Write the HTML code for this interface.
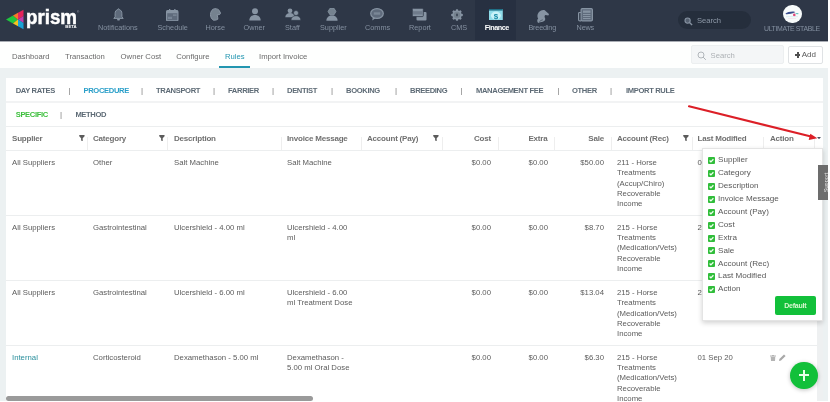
<!DOCTYPE html>
<html><head><meta charset="utf-8">
<style>
*{margin:0;padding:0;box-sizing:border-box}
html,body{width:830px;height:402px;overflow:hidden;background:#fff;font-family:"Liberation Sans",sans-serif}
.a{position:absolute}
.t{position:absolute;white-space:nowrap;line-height:10px}
#nav{left:0;top:0;width:828px;height:41px;background:#2e3747;border-bottom:1.5px solid #2b3342}
.nl{color:#8490a0;font-size:7.3px;top:23px}
.ni{position:absolute;top:8px}
#sub{left:0;top:42px;width:830px;height:26px;background:#fefffe}
.sl{color:#6a6a6a;font-size:7.7px;top:52px}
#gray{left:0;top:68px;width:828px;height:334px;background:#ecf1f2}
#panel{left:6px;top:78px;width:817px;height:324px;background:#fff}
.tab{color:#5e6b76;font-size:7.6px;font-weight:bold;top:85.8px;letter-spacing:-0.35px}
.bar{color:#777;font-size:8px;top:86px}
.hl{position:absolute;left:6px;width:817px;height:1px;background:#eceeef}
.th{color:#707070;font-size:8px;font-weight:bold;top:134.4px;letter-spacing:-0.2px}
.sep{position:absolute;top:137px;width:1px;height:13px;background:#eeeeee}
.td{color:#5c5c5c;font-size:7.75px}
.r{text-align:right}
.flt{position:absolute;top:135.1px;width:5.8px;height:6.2px}
</style></head><body><div id="root" style="position:absolute;left:0;top:0;width:830px;height:402px;will-change:transform">

<!-- NAV -->
<div id="nav" class="a">
  <!-- logo -->
  <svg class="a" style="left:0;top:0" width="30" height="40" viewBox="0 0 30 40">
    <polygon points="6,19.5 13,15.6 17.7,19.5 13,23.4" fill="#1fc63e"/>
    <polygon points="13,15.6 18,12.8 18,19.5 17.7,19.5" fill="#f47a2a"/>
    <polygon points="18,12.8 23.5,9.7 23.5,16 18,19.5" fill="#e6245c"/>
    <polygon points="18,19.5 23.5,16 23.5,23" fill="#c23fae"/>
    <polygon points="18,19.5 23.5,23 23.5,29.3 18,26.2" fill="#1aa2d6"/>
    <polygon points="13,23.4 17.7,19.5 18,19.5 18,26.2" fill="#f3c41f"/>
  </svg>
  <div class="t" style="left:26.3px;top:5.6px;font-size:20.6px;line-height:22px;font-weight:bold;color:#fff;-webkit-text-stroke:0.5px #fff;transform:scaleX(0.91);transform-origin:0 0">prism</div>
  <div class="t" style="left:77px;top:10px;font-size:3px;line-height:4px;color:#aab">&#174;</div>
  <div class="t" style="left:65.3px;top:25.2px;font-size:4.3px;line-height:4px;font-weight:bold;color:#fff">BETA</div>

  <!-- items -->
  <svg class="ni" style="left:113px;top:8px" width="11" height="13" viewBox="0 0 11 13"><path d="M5.5 0.8c.5 0 .8.3.8.8 1.7.5 2.6 2 2.6 3.9v3.3l1.3 1.6H0.8l1.3-1.6V5.5c0-1.9.9-3.4 2.6-3.9 0-.5.3-.8.8-.8z" fill="#5f6b7c" stroke="#8794a3" stroke-width="1"/><path d="M4 11h3l-.5 1.5h-2z" fill="#8794a3"/></svg>
  <div class="t nl" style="left:98px">Notifications</div>

  <svg class="ni" style="left:166px;top:8.5px" width="12.5" height="12.5" viewBox="0 0 12.5 12.5"><rect x="0.6" y="1.6" width="11.3" height="10.3" rx="1.2" fill="#5f6b7c" stroke="#8794a3" stroke-width="1.2"/><rect x="0.6" y="1.6" width="11.3" height="2.6" fill="#8794a3"/><rect x="3" y="0" width="1.3" height="2.6" fill="#8794a3"/><rect x="8.2" y="0" width="1.3" height="2.6" fill="#8794a3"/><rect x="7" y="5.6" width="3.5" height="1" fill="#8794a3"/><rect x="2" y="7.8" width="4" height="2.2" fill="#788596"/></svg>
  <div class="t nl" style="left:157.5px">Schedule</div>

  <svg class="ni" style="left:209.5px;top:8.3px" width="11.5" height="13" viewBox="0 0 11.5 13"><path d="M4.7 0.7C7 0.6 8.4 1.4 9.1 2.3L10.6 5.3 9.7 6.5 7.1 6.9C7.6 8.5 8 10 7.8 11.2 6.5 12.1 4.6 12.4 3.5 12.2 1.3 10.8 0.5 8.8 0.5 6.7 0.5 3.3 2.4 0.9 4.7 0.7z" fill="#75828f" stroke="#8b97a5" stroke-width="1"/></svg>
  <div class="t nl" style="left:205.5px">Horse</div>

  <svg class="ni" style="left:248.5px;top:8px" width="12" height="13" viewBox="0 0 12 13"><circle cx="6" cy="3.3" r="3" fill="#8794a3"/><path d="M0.3 12.6c0-3.5 2.4-5.6 5.7-5.6s5.7 2.1 5.7 5.6z" fill="#8794a3"/></svg>
  <div class="t nl" style="left:243.5px">Owner</div>

  <svg class="ni" style="left:284.5px;top:8px" width="16" height="12.5" viewBox="0 0 16 12.5"><circle cx="5" cy="2.8" r="2.4" fill="#8794a3"/><path d="M0.3 9.3c0-2.6 2-4.3 4.7-4.3s4.2 1.5 4.6 3v1.3z" fill="#8794a3"/><circle cx="11" cy="5" r="2.5" fill="#8794a3" stroke="#2e3747" stroke-width=".6"/><path d="M6 12.3c0-2.8 2-4.6 5-4.6s4.8 1.8 4.8 4.6z" fill="#8794a3" stroke="#2e3747" stroke-width=".6"/></svg>
  <div class="t nl" style="left:285px">Staff</div>

  <svg class="ni" style="left:326.3px;top:8px" width="12" height="13" viewBox="0 0 12 13"><path d="M4 0.3h4l1.9 3.2L8 6.8H4L2.1 3.5z" fill="#75828f" stroke="#8794a3" stroke-width=".9"/><path d="M0.4 12.8c0-3.2 2.3-5.2 5.6-5.2s5.6 2 5.6 5.2z" fill="#8794a3"/></svg>
  <div class="t nl" style="left:320px">Supplier</div>

  <svg class="ni" style="left:370px;top:8px" width="14" height="13" viewBox="0 0 14 13"><ellipse cx="7" cy="5.5" rx="6.3" ry="4.9" fill="#5f6b7c" stroke="#8794a3" stroke-width="1.2"/><path d="M2.8 9.2l-.6 3.4 3.4-2.4z" fill="#8794a3"/><rect x="3.8" y="4.3" width="6.4" height="2.4" fill="#7a8796"/></svg>
  <div class="t nl" style="left:365px">Comms</div>

  <svg class="ni" style="left:411.5px;top:8px" width="15" height="13" viewBox="0 0 15 13"><rect x="4.5" y="4" width="10" height="8.5" rx="1" fill="#8794a3"/><rect x="0.3" y="0.3" width="11" height="8.3" rx="1" fill="#8794a3" stroke="#2e3747" stroke-width=".8"/><rect x="1" y="3.2" width="9.6" height="3.3" fill="#6f7b8b"/></svg>
  <div class="t nl" style="left:409px">Report</div>

  <svg class="ni" style="left:450.9px;top:8.6px" width="12" height="12" viewBox="0 0 12 12"><g fill="#8794a3"><circle cx="6" cy="6" r="4.6"/><rect x="4.8" y="0.2" width="2.4" height="11.6" rx=".8"/><rect x="4.8" y="0.2" width="2.4" height="11.6" rx=".8" transform="rotate(90 6 6)"/><rect x="4.8" y="0.2" width="2.4" height="11.6" rx=".8" transform="rotate(45 6 6)"/><rect x="4.8" y="0.2" width="2.4" height="11.6" rx=".8" transform="rotate(-45 6 6)"/></g><circle cx="6" cy="6" r="3.3" fill="#75828f"/><ellipse cx="6" cy="6" rx="1" ry="1.4" fill="#3e4858"/></svg>
  <div class="t nl" style="left:451px">CMS</div>

  <div class="a" style="left:474.7px;top:0;width:41.5px;height:40px;background:#273041"></div>
  <svg class="ni" style="left:488.8px;top:8.8px" width="13.8" height="11.7" viewBox="0 0 13.8 11.7"><rect x="0" y="0" width="13.8" height="11.7" fill="#8fdbe9"/><rect x="0" y="0" width="13.8" height="1.6" fill="#1f6f86"/><ellipse cx="6.9" cy="6.5" rx="5" ry="4" fill="#c9f2f8"/><text x="6.9" y="9.6" font-size="8" font-weight="bold" text-anchor="middle" fill="#168aa6" font-family="Liberation Sans">$</text></svg>
  <div class="t nl" style="left:484.7px;color:#fff;font-weight:bold;letter-spacing:-0.5px">Finance</div>

  <svg class="ni" style="left:535.8px;top:9px" width="13.5" height="14.5" viewBox="0 0 13.5 14.5"><path d="M2.2 14C1 12.8.8 11 2.2 9.6 1 8 1.1 5 3 3 4.6 1.2 7 .5 8.8 1.2l1.3 1.2 3 2.6-.8 1.5-2.8-.4C8.6 6.4 8.2 7.6 9 9c.7 1.6-.3 3.3-2.3 3.8-1.6.4-3.3.6-4.5 1.2z" fill="#8794a3"/><path d="M3.5 12.5c1-1 2.3-1.3 3.3-1.7" stroke="#2e3747" stroke-width=".6" fill="none"/></svg>
  <div class="t nl" style="left:528.4px;letter-spacing:-0.2px">Breeding</div>

  <svg class="ni" style="left:577.5px;top:8px" width="15" height="13.5" viewBox="0 0 15 13.5"><rect x="3.1" y="0.6" width="11.3" height="12.3" rx="1.2" fill="#5f6b7c" stroke="#8794a3" stroke-width="1.2"/><path d="M3.1 4.5H1.6c-.6 0-1 .4-1 1v6.2c0 .7.5 1.2 1.2 1.2h1.3" fill="none" stroke="#8794a3" stroke-width="1.2"/><rect x="5" y="2.5" width="7.5" height="2.3" fill="#8794a3"/><rect x="5" y="6" width="7.5" height="1" fill="#8794a3"/><rect x="5" y="8" width="7.5" height="1" fill="#8794a3"/><rect x="5" y="10" width="7.5" height="1" fill="#8794a3"/></svg>
  <div class="t nl" style="left:576.6px;letter-spacing:-0.2px">News</div>

  <div class="a" style="left:678px;top:11px;width:73px;height:18px;border-radius:9px;background:#252e3c"></div>
  <svg class="a" style="left:684px;top:16.5px" width="9" height="9" viewBox="0 0 9 9"><circle cx="3.6" cy="3.6" r="2.6" fill="#556070" stroke="#8692a1" stroke-width="1.1"/><path d="M5.5 5.5l2.6 2.6" stroke="#8692a1" stroke-width="1.4"/></svg>
  <div class="t nl" style="left:697px;top:15.5px;font-size:7.6px;color:#8e99a8">Search</div>

  <div class="a" style="left:783.3px;top:4.7px;width:18.4px;height:18.5px;border-radius:50%;background:#f7fbfb"></div>
  <svg class="a" style="left:783px;top:4.5px" width="19" height="19" viewBox="0 0 19 19"><path d="M2.5 8.6C4 7 7 6.3 10.5 6.4 12 6.5 13 7 11.5 7.6 9 8.6 6 9.4 3 9.2z" fill="#3b4f8e"/><circle cx="11.3" cy="9.9" r="1.3" fill="#e2477a"/><path d="M12 8.2l2.5-.3 1.5 1.2-2.2.2z" fill="#5cc0b8"/><rect x="3" y="11.5" width="12" height="0.6" fill="#cde6ec"/><rect x="5" y="13" width="8" height="0.5" fill="#f0d6e0"/></svg>
  <div class="t nl" style="left:764px;top:24px;font-size:6.9px;letter-spacing:-0.35px">ULTIMATE STABLE</div>
</div>

<!-- SUB NAV -->
<div class="a" style="left:0;top:41px;width:828px;height:1px;background:#a9adb4"></div>
<div id="sub" class="a"></div>
<div class="t sl" style="left:12px">Dashboard</div>
<div class="t sl" style="left:65px">Transaction</div>
<div class="t sl" style="left:120.6px">Owner Cost</div>
<div class="t sl" style="left:176.3px">Configure</div>
<div class="t sl" style="left:225px;color:#2396b0">Rules</div>
<div class="a" style="left:219px;top:66px;width:31px;height:2px;background:#2396b0"></div>
<div class="t sl" style="left:259px">Import Invoice</div>

<div class="a" style="left:691px;top:45px;width:93px;height:19px;background:#f4f6f7;border:1px solid #eceff0;border-radius:2px"></div>
<svg class="a" style="left:697px;top:51px" width="10" height="10" viewBox="0 0 10 10"><circle cx="4" cy="4" r="3" fill="none" stroke="#aab0b4" stroke-width="0.9"/><path d="M6.2 6.2l2.6 2.6" stroke="#aab0b4" stroke-width="1"/></svg>
<div class="t" style="left:710.5px;top:50.5px;font-size:7.7px;color:#adb1b5">Search</div>
<div class="a" style="left:788px;top:45.5px;width:35px;height:18px;background:#fff;border:1px solid #dfe2e4;border-radius:2px"></div>
<div class="a" style="left:794.6px;top:53.6px;width:5.9px;height:2px;background:#505050"></div><div class="a" style="left:796.55px;top:51.65px;width:2px;height:5.9px;background:#505050"></div><div class="t" style="left:801.7px;top:50px;font-size:8px;color:#5a5a5a">Add</div>

<!-- GRAY + PANEL -->
<div id="gray" class="a"></div>
<div id="panel" class="a"></div>

<!-- tabs -->
<div class="t tab" style="left:15.7px">DAY RATES</div>
<div class="t bar" style="left:68.5px">|</div>
<div class="t tab" style="left:83.5px;color:#2a9fc9">PROCEDURE</div>
<div class="t bar" style="left:141px">|</div>
<div class="t tab" style="left:156px">TRANSPORT</div>
<div class="t bar" style="left:213px">|</div>
<div class="t tab" style="left:228px">FARRIER</div>
<div class="t bar" style="left:272px">|</div>
<div class="t tab" style="left:287px">DENTIST</div>
<div class="t bar" style="left:331px">|</div>
<div class="t tab" style="left:346px">BOOKING</div>
<div class="t bar" style="left:395px">|</div>
<div class="t tab" style="left:410px">BREEDING</div>
<div class="t bar" style="left:460.5px">|</div>
<div class="t tab" style="left:476px">MANAGEMENT FEE</div>
<div class="t bar" style="left:557.5px">|</div>
<div class="t tab" style="left:572px">OTHER</div>
<div class="t bar" style="left:610px">|</div>
<div class="t tab" style="left:626px">IMPORT RULE</div>
<div class="hl" style="top:101px;height:2px;background:#f2f3f4"></div>

<div class="t tab" style="left:15.7px;top:109.8px;color:#3cbf3c">SPECIFIC</div>
<div class="t bar" style="left:60px;top:110px">|</div>
<div class="t tab" style="left:75.4px;top:109.8px">METHOD</div>
<div class="hl" style="top:126px"></div>

<!-- header -->
<div class="t th" style="left:12px">Supplier</div>
<div class="t th" style="left:93px">Category</div>
<div class="t th" style="left:174px">Description</div>
<div class="t th" style="left:287px">Invoice Message</div>
<div class="t th" style="left:367px">Account (Pay)</div>
<div class="t th r" style="left:451px;width:40px">Cost</div>
<div class="t th r" style="left:507px;width:40.5px">Extra</div>
<div class="t th r" style="left:564px;width:40px">Sale</div>
<div class="t th" style="left:617px">Account (Rec)</div>
<div class="t th" style="left:697.5px">Last Modified</div>
<div class="t th" style="left:770px">Action</div>
<svg class="flt" style="left:79.3px" viewBox="0 0 6 7"><path d="M0 0h6v1.5L3.9 3.6V7L2.1 6.2V3.6L0 1.5z" fill="#5c5c5c"/></svg>
<svg class="flt" style="left:158.8px" viewBox="0 0 6 7"><path d="M0 0h6v1.5L3.9 3.6V7L2.1 6.2V3.6L0 1.5z" fill="#5c5c5c"/></svg>
<svg class="flt" style="left:433.2px" viewBox="0 0 6 7"><path d="M0 0h6v1.5L3.9 3.6V7L2.1 6.2V3.6L0 1.5z" fill="#5c5c5c"/></svg>
<svg class="flt" style="left:683.4px" viewBox="0 0 6 7"><path d="M0 0h6v1.5L3.9 3.6V7L2.1 6.2V3.6L0 1.5z" fill="#5c5c5c"/></svg>
<div class="sep" style="left:87px"></div>
<div class="sep" style="left:167px"></div>
<div class="sep" style="left:281px"></div>
<div class="sep" style="left:361px"></div>
<div class="sep" style="left:442px"></div>
<div class="sep" style="left:498px"></div>
<div class="sep" style="left:554px"></div>
<div class="sep" style="left:611px"></div>
<div class="sep" style="left:692px"></div>
<div class="sep" style="left:763px"></div>
<div class="sep" style="left:814px"></div>
<svg class="a" style="left:817.3px;top:137.3px" width="4" height="2.2" viewBox="0 0 4 2.2"><path d="M0 0h4L2 2.2z" fill="#4a5060"/></svg>
<div class="hl" style="top:150px"></div>

<!-- vertical track -->
<div class="a" style="left:817px;top:151px;width:6px;height:251px;background:#eef0f1"></div>

<!-- rows -->
<div class="hl" style="top:215px;width:811px"></div>
<div class="hl" style="top:280px;width:811px"></div>
<div class="hl" style="top:345px;width:811px"></div>

<!-- row 1 -->
<div class="t td" style="left:12px;top:158.2px">All Suppliers</div>
<div class="t td" style="left:93px;top:158.2px">Other</div>
<div class="t td" style="left:174px;top:158.2px">Salt Machine</div>
<div class="t td" style="left:287px;top:158.2px">Salt Machine</div>
<div class="t td r" style="left:441px;width:50px;top:158.2px">$0.00</div>
<div class="t td r" style="left:498px;width:50px;top:158.2px">$0.00</div>
<div class="t td r" style="left:554px;width:50px;top:158.2px">$50.00</div>
<div class="t td" style="left:617px;top:158.2px;line-height:10.3px">211 - Horse<br>Treatments<br>(Accup/Chiro)<br>Recoverable<br>Income</div>
<div class="t td" style="left:697.5px;top:158.2px">01 Sep 20</div>

<!-- row 2 -->
<div class="t td" style="left:12px;top:222.7px">All Suppliers</div>
<div class="t td" style="left:93px;top:222.7px">Gastrointestinal</div>
<div class="t td" style="left:174px;top:222.7px">Ulcershield - 4.00 ml</div>
<div class="t td" style="left:287px;top:222.7px;line-height:10.3px">Ulcershield - 4.00<br>ml</div>
<div class="t td r" style="left:441px;width:50px;top:222.7px">$0.00</div>
<div class="t td r" style="left:498px;width:50px;top:222.7px">$0.00</div>
<div class="t td r" style="left:554px;width:50px;top:222.7px">$8.70</div>
<div class="t td" style="left:617px;top:222.7px;line-height:10.3px">215 - Horse<br>Treatments<br>(Medication/Vets)<br>Recoverable<br>Income</div>
<div class="t td" style="left:697.5px;top:222.7px">21 Sep 20</div>

<!-- row 3 -->
<div class="t td" style="left:12px;top:288.2px">All Suppliers</div>
<div class="t td" style="left:93px;top:288.2px">Gastrointestinal</div>
<div class="t td" style="left:174px;top:288.2px">Ulcershield - 6.00 ml</div>
<div class="t td" style="left:287px;top:288.2px;line-height:10.3px">Ulcershield - 6.00<br>ml Treatment Dose</div>
<div class="t td r" style="left:441px;width:50px;top:288.2px">$0.00</div>
<div class="t td r" style="left:498px;width:50px;top:288.2px">$0.00</div>
<div class="t td r" style="left:554px;width:50px;top:288.2px">$13.04</div>
<div class="t td" style="left:617px;top:288.2px;line-height:10.3px">215 - Horse<br>Treatments<br>(Medication/Vets)<br>Recoverable<br>Income</div>
<div class="t td" style="left:697.5px;top:288.2px">21 Sep 20</div>

<!-- row 4 -->
<div class="t td" style="left:12px;top:352.7px;color:#2a8f9c">Internal</div>
<div class="t td" style="left:93px;top:352.7px">Corticosteroid</div>
<div class="t td" style="left:174px;top:352.7px">Dexamethason - 5.00 ml</div>
<div class="t td" style="left:287px;top:352.7px;line-height:10.3px">Dexamethason -<br>5.00 ml Oral Dose</div>
<div class="t td r" style="left:441px;width:50px;top:352.7px">$0.00</div>
<div class="t td r" style="left:498px;width:50px;top:352.7px">$0.00</div>
<div class="t td r" style="left:554px;width:50px;top:352.7px">$6.30</div>
<div class="t td" style="left:617px;top:352.7px;line-height:10.3px">215 - Horse<br>Treatments<br>(Medication/Vets)<br>Recoverable<br>Income</div>
<div class="t td" style="left:697.5px;top:352.7px">01 Sep 20</div>
<svg class="a" style="left:770px;top:354.5px" width="6" height="6" viewBox="0 0 6 6"><rect x="0" y="0.5" width="6" height="1" fill="#b4b4b4"/><rect x="2" y="0" width="2" height="1" fill="#b4b4b4"/><path d="M0.7 1.8h4.6L5 6H1z" fill="#b4b4b4"/></svg>
<svg class="a" style="left:779px;top:354px" width="7" height="7" viewBox="0 0 7 7"><path d="M0 7l.4-2L5 0.4 6.6 2 2 6.6z" fill="#a8a8a8"/></svg>

<!-- h scrollbar -->
<div class="a" style="left:6px;top:395.5px;width:306.5px;height:5.5px;border-radius:3px;background:#9a9a9a"></div>

<div class="a" style="left:0;top:401px;width:830px;height:1px;background:#fff"></div>
<!-- red arrow -->
<svg class="a" style="left:0;top:0" width="830" height="402" viewBox="0 0 830 402">
  <line x1="689" y1="106.3" x2="811" y2="136.5" stroke="#dc1f27" stroke-width="2" stroke-linecap="round"/>
  <polygon points="817.3,138.3 808.7,139.9 810.3,133.8" fill="#dc1f27"/>
</svg>

<!-- dropdown -->
<div class="a" style="left:701.5px;top:147.5px;width:121.5px;height:173.5px;background:#fff;border:1px solid #e4e4e4;box-shadow:0 2px 5px rgba(0,0,0,.18)"></div>
<div class="a" style="left:708px;top:157.10px;width:7px;height:7px;border-radius:1px;background:#30bd3a"></div>
<svg class="a" style="left:708px;top:157.10px" width="7" height="7" viewBox="0 0 7 7"><path d="M1.6 3.5l1.3 1.4 2.5-2.6" stroke="#f2fff2" stroke-width="1.3" fill="none"/></svg>
<div class="t" style="left:718px;top:155.30px;font-size:8.1px;color:#585858">Supplier</div>
<div class="a" style="left:708px;top:170.00px;width:7px;height:7px;border-radius:1px;background:#30bd3a"></div>
<svg class="a" style="left:708px;top:170.00px" width="7" height="7" viewBox="0 0 7 7"><path d="M1.6 3.5l1.3 1.4 2.5-2.6" stroke="#f2fff2" stroke-width="1.3" fill="none"/></svg>
<div class="t" style="left:718px;top:168.20px;font-size:8.1px;color:#585858">Category</div>
<div class="a" style="left:708px;top:182.90px;width:7px;height:7px;border-radius:1px;background:#30bd3a"></div>
<svg class="a" style="left:708px;top:182.90px" width="7" height="7" viewBox="0 0 7 7"><path d="M1.6 3.5l1.3 1.4 2.5-2.6" stroke="#f2fff2" stroke-width="1.3" fill="none"/></svg>
<div class="t" style="left:718px;top:181.10px;font-size:8.1px;color:#585858">Description</div>
<div class="a" style="left:708px;top:195.80px;width:7px;height:7px;border-radius:1px;background:#30bd3a"></div>
<svg class="a" style="left:708px;top:195.80px" width="7" height="7" viewBox="0 0 7 7"><path d="M1.6 3.5l1.3 1.4 2.5-2.6" stroke="#f2fff2" stroke-width="1.3" fill="none"/></svg>
<div class="t" style="left:718px;top:194.00px;font-size:8.1px;color:#585858">Invoice Message</div>
<div class="a" style="left:708px;top:208.70px;width:7px;height:7px;border-radius:1px;background:#30bd3a"></div>
<svg class="a" style="left:708px;top:208.70px" width="7" height="7" viewBox="0 0 7 7"><path d="M1.6 3.5l1.3 1.4 2.5-2.6" stroke="#f2fff2" stroke-width="1.3" fill="none"/></svg>
<div class="t" style="left:718px;top:206.90px;font-size:8.1px;color:#585858">Account (Pay)</div>
<div class="a" style="left:708px;top:221.60px;width:7px;height:7px;border-radius:1px;background:#30bd3a"></div>
<svg class="a" style="left:708px;top:221.60px" width="7" height="7" viewBox="0 0 7 7"><path d="M1.6 3.5l1.3 1.4 2.5-2.6" stroke="#f2fff2" stroke-width="1.3" fill="none"/></svg>
<div class="t" style="left:718px;top:219.80px;font-size:8.1px;color:#585858">Cost</div>
<div class="a" style="left:708px;top:234.50px;width:7px;height:7px;border-radius:1px;background:#30bd3a"></div>
<svg class="a" style="left:708px;top:234.50px" width="7" height="7" viewBox="0 0 7 7"><path d="M1.6 3.5l1.3 1.4 2.5-2.6" stroke="#f2fff2" stroke-width="1.3" fill="none"/></svg>
<div class="t" style="left:718px;top:232.70px;font-size:8.1px;color:#585858">Extra</div>
<div class="a" style="left:708px;top:247.40px;width:7px;height:7px;border-radius:1px;background:#30bd3a"></div>
<svg class="a" style="left:708px;top:247.40px" width="7" height="7" viewBox="0 0 7 7"><path d="M1.6 3.5l1.3 1.4 2.5-2.6" stroke="#f2fff2" stroke-width="1.3" fill="none"/></svg>
<div class="t" style="left:718px;top:245.60px;font-size:8.1px;color:#585858">Sale</div>
<div class="a" style="left:708px;top:260.30px;width:7px;height:7px;border-radius:1px;background:#30bd3a"></div>
<svg class="a" style="left:708px;top:260.30px" width="7" height="7" viewBox="0 0 7 7"><path d="M1.6 3.5l1.3 1.4 2.5-2.6" stroke="#f2fff2" stroke-width="1.3" fill="none"/></svg>
<div class="t" style="left:718px;top:258.50px;font-size:8.1px;color:#585858">Account (Rec)</div>
<div class="a" style="left:708px;top:273.20px;width:7px;height:7px;border-radius:1px;background:#30bd3a"></div>
<svg class="a" style="left:708px;top:273.20px" width="7" height="7" viewBox="0 0 7 7"><path d="M1.6 3.5l1.3 1.4 2.5-2.6" stroke="#f2fff2" stroke-width="1.3" fill="none"/></svg>
<div class="t" style="left:718px;top:271.40px;font-size:8.1px;color:#585858">Last Modified</div>
<div class="a" style="left:708px;top:286.10px;width:7px;height:7px;border-radius:1px;background:#30bd3a"></div>
<svg class="a" style="left:708px;top:286.10px" width="7" height="7" viewBox="0 0 7 7"><path d="M1.6 3.5l1.3 1.4 2.5-2.6" stroke="#f2fff2" stroke-width="1.3" fill="none"/></svg>
<div class="t" style="left:718px;top:284.30px;font-size:8.1px;color:#585858">Action</div>
<div class="a" style="left:774.8px;top:296px;width:41px;height:19px;border-radius:2px;background:#12c03a"></div>
<div class="t" style="left:774.8px;top:300.8px;width:41px;text-align:center;font-size:7px;font-weight:bold;letter-spacing:-0.2px;color:#d9f7d0">Default</div>

<!-- support tab -->
<div class="a" style="left:818px;top:165px;width:9.7px;height:35px;background:#6c6c6c"></div>
<div class="t" style="left:808.6px;top:178px;width:35px;text-align:center;font-size:5.6px;line-height:9px;color:#e6e6e6;transform:rotate(-90deg)">Support</div>

<!-- FAB -->
<div class="a" style="left:790px;top:361.5px;width:27.5px;height:27.5px;border-radius:50%;background:#12c03a;box-shadow:0 1px 4px rgba(0,0,0,.25)"></div>
<div class="a" style="left:798.5px;top:374.2px;width:10.5px;height:2px;background:#e8ffe8"></div>
<div class="a" style="left:802.75px;top:370px;width:2px;height:10.5px;background:#e8ffe8"></div>

</div></body></html>
